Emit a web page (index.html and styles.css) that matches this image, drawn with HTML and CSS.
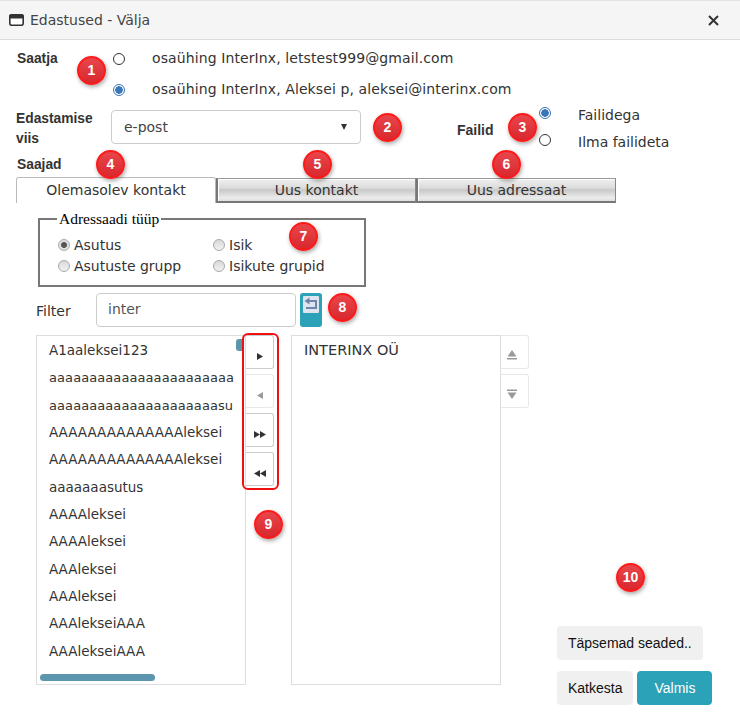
FILE: index.html
```html
<!DOCTYPE html>
<html lang="et">
<head>
<meta charset="utf-8">
<title>Edastused - Välja</title>
<link rel="stylesheet" href="styles.css">
</head>
<body>
<div class="dialog">
  <header class="titlebar">
    <svg class="win-icon" width="15" height="12" viewBox="0 0 15 12"><rect x="0.8" y="0.8" width="13.4" height="10.4" rx="2" fill="#fff" stroke="#333" stroke-width="1.6"/><rect x="0.8" y="0.8" width="13.4" height="3.2" rx="1.2" fill="#333" stroke="#333" stroke-width="1.2"/></svg>
    <span class="title">Edastused - Välja</span>
    <svg class="close" width="11" height="11" viewBox="0 0 11 11"><path d="M1 1L10 10M10 1L1 10" stroke="#333" stroke-width="2"/></svg>
  </header>

  <section class="sender">
    <div class="label sender-label">Saatja</div>
    <div class="sender-options">
      <div class="sender-row"><span class="radio"></span><span class="txt">osaühing InterInx, letstest999@gmail.com</span></div>
      <div class="sender-row"><span class="radio checked"></span><span class="txt">osaühing InterInx, Aleksei p, aleksei@interinx.com</span></div>
    </div>
  </section>

  <section class="delivery">
    <div class="label delivery-label">Edastamise viis</div>
    <div class="select"><span class="txt">e-post</span><span class="caret"></span></div>
    <div class="label files-label">Failid</div>
    <div class="files">
      <div class="file-row"><span class="radio checked"></span><span class="txt">Failidega</span></div>
      <div class="file-row"><span class="radio"></span><span class="txt">Ilma failideta</span></div>
    </div>
  </section>

  <div class="label recipients">Saajad</div>
  <nav class="tabs">
    <div class="tab active">Olemasolev kontakt</div>
    <div class="tab">Uus kontakt</div>
    <div class="tab">Uus adressaat</div>
  </nav>

  <fieldset class="type-box">
    <legend>Adressaadi tüüp</legend>
    <div class="type-grid">
      <div class="type-opt"><span class="gray-radio on"></span>Asutus</div>
      <div class="type-opt"><span class="gray-radio"></span>Isik</div>
      <div class="type-opt"><span class="gray-radio"></span>Asutuste grupp</div>
      <div class="type-opt"><span class="gray-radio"></span>Isikute grupid</div>
    </div>
  </fieldset>

  <div class="filter">
    <span class="filter-label">Filter</span>
    <div class="input">inter</div>
    <div class="reset">
      <svg width="16" height="17" viewBox="0 0 16 17"><rect x="0" y="0" width="16" height="17" rx="1" fill="#dfe5ef"/><path d="M6 5H13V12H3" fill="none" stroke="#6f86ab" stroke-width="2"/><path d="M1.500 5L6.500 1.500V8.500Z" fill="#6f86ab"/></svg>
    </div>
  </div>

  <div class="picker">
    <div class="list left">
      <div class="item">A1aaleksei123</div>
      <div class="item tight">aaaaaaaaaaaaaaaaaaaaaaa</div>
      <div class="item tight">aaaaaaaaaaaaaaaaaaaaasu</div>
      <div class="item">AAAAAAAAAAAAAAleksei</div>
      <div class="item">AAAAAAAAAAAAAAleksei</div>
      <div class="item">aaaaaaasutus</div>
      <div class="item">AAAAleksei</div>
      <div class="item">AAAAleksei</div>
      <div class="item">AAAleksei</div>
      <div class="item">AAAleksei</div>
      <div class="item">AAAlekseiAAA</div>
      <div class="item">AAAlekseiAAA</div>
      <span class="thumb-v"></span>
      <span class="thumb-h"></span>
    </div>
    <div class="moves">
      <div class="btn"><svg width="6" height="7" viewBox="0 0 6 7"><path d="M0 0L6 3.500L0 7Z" fill="#333"/></svg></div>
      <div class="btn off"><svg width="6" height="7" viewBox="0 0 6 7"><path d="M6 0V7L0 3.500Z" fill="#999"/></svg></div>
      <div class="btn"><svg width="12" height="7" viewBox="0 0 12 7"><path d="M0 0L6 3.500L0 7ZM6 0L12 3.500L6 7Z" fill="#333"/></svg></div>
      <div class="btn"><svg width="12" height="7" viewBox="0 0 12 7"><path d="M6 0V7L0 3.500ZM12 0V7L6 3.500Z" fill="#333"/></svg></div>
      <span class="ring"></span>
    </div>
    <div class="list right"><div class="item">INTERINX OÜ</div></div>
    <div class="order">
      <div class="btn off"><svg width="10" height="10" viewBox="0 0 10 10"><path d="M5 0L9.500 6.500H.5Z" fill="#999"/><rect y="8" width="10" height="1.500" fill="#999"/></svg></div>
      <div class="btn off"><svg width="10" height="10" viewBox="0 0 10 10"><rect y=".5" width="10" height="1.500" fill="#999"/><path d="M.5 3.500H9.500L5 10Z" fill="#999"/></svg></div>
    </div>
    <div class="actions">
      <div class="act grey">Täpsemad seaded..</div>
      <div class="act-row">
        <div class="act grey">Katkesta</div>
        <div class="act teal">Valmis</div>
      </div>
    </div>
  </div>

  <span class="badge b1">1</span>
  <span class="badge b2">2</span>
  <span class="badge b3">3</span>
  <span class="badge b4">4</span>
  <span class="badge b5">5</span>
  <span class="badge b6">6</span>
  <span class="badge b7">7</span>
  <span class="badge b8">8</span>
  <span class="badge b9">9</span>
  <span class="badge b10">10</span>
</div>
</body>
</html>
```

FILE: styles.css
```css
* { box-sizing: border-box; }
html, body { margin: 0; padding: 0; background: #fff; }
body { width: 740px; height: 714px; overflow: hidden; font-family: "DejaVu Sans", sans-serif; font-size: 14px; color: #333; }
.dialog { position: relative; width: 740px; height: 714px; border-top: 1px solid #e2e2e2; }

.titlebar { height: 39px; background: #f5f5f5; border-bottom: 1px solid #dcdcdc; display: flex; align-items: center; padding: 0 21px 0 9px; color: #444; font-size: 14px; }
.win-icon { margin-right: 6px; }
.title { flex: 1; }

.label { font-family: "Liberation Sans", sans-serif; font-weight: 700; font-size: 13.800px; color: #333; }

.sender { display: flex; padding: 3px 0 0 17px; height: 70px; }
.sender-label { width: 96px; padding-top: 8px; line-height: 16px; }
.sender-options { display: flex; flex-direction: column; }
.sender-row { display: flex; align-items: center; height: 31px; }
.sender-row .radio { margin: 0 27px 0 0; }
.sender-row .txt { letter-spacing: .1px; padding-bottom: 2px; }

.radio { display: inline-block; width: 12px; height: 12px; border: 1px solid #333; border-radius: 50%; background: #fff; flex: none; }
.radio.checked { border-color: #3a76b8; background: radial-gradient(circle, #3a76b8 0 3.500px, #fff 4px); }

.delivery { display: flex; padding-left: 16px; height: 47px; }
.delivery-label { width: 95px; line-height: 20px; margin-top: -1px; height: 40px; }
.select { width: 250px; height: 34px; border: 1px solid #ccc; border-radius: 4px; display: flex; align-items: center; justify-content: space-between; padding: 0 13px 0 12px; color: #444; }
.caret { width: 0; height: 0; border-left: 3.500px solid transparent; border-right: 3.500px solid transparent; border-top: 6px solid #333; }
.files-label { margin-left: 96px; margin-top: 12px; width: 82px; font-size: 14px; }
.files { width: 150px; margin-top: -9px; }
.file-row { display: flex; height: 27px; align-items: center; }
.file-row .radio { margin-right: 27px; margin-top: -4px; }

.recipients { padding-left: 17px; line-height: 16px; height: 14px; margin-bottom: 6px; }
.tabs { display: flex; padding-left: 16px; height: 26px; align-items: flex-end; }
.tab { width: 200px; height: 25px; text-align: center; line-height: 23px; color: #333; border: 1px solid #8a8a8a; border-width: 1px 1px 2px 2px; border-color: #999 #888 #777 #777; box-shadow: inset 1px 1px #fff; background: linear-gradient(#f0f0f0, #dcdcdc 40%, #c8c8c8 50%, #ebebeb 85%, #e0e0e0); }
.tab.active { height: 26px; background: #fff; border: 1px solid #bbb; border-bottom: none; border-radius: 3px 3px 0 0; box-shadow: none; line-height: 25px; }

.type-box { width: 328px; height: 76px; margin: 8px 0 0 38px; padding: 0 16px; border: 2px solid #777; }
.type-box legend { font-family: "Liberation Serif", serif; font-size: 15.500px; color: #000; padding: 0 2px; margin-left: 1px; line-height: 15px; }
.type-grid { display: grid; grid-template-columns: 155px 1fr; grid-auto-rows: 21px; margin-top: 8px; margin-left: 2px; }
.type-opt { display: flex; align-items: center; gap: 4px; color: #333; }
.gray-radio { width: 12px; height: 12px; border-radius: 50%; border: 1px solid #aaa; background: linear-gradient(#d8d8d8, #f2f2f2); flex: none; }
.gray-radio.on { background: radial-gradient(circle, #555 0 2.500px, #e2e2e2 3.500px); }

.filter { display: flex; height: 34px; margin: 6px 0 0 36px; align-items: center; }
.filter-label { width: 60px; padding-top: 2px; color: #333; }
.input { width: 200px; height: 34px; border: 1px solid #ccc; border-radius: 4px; padding: 0 11px; line-height: 31px; color: #555; }
.reset { width: 22px; height: 34px; margin-left: 4px; background: #2ca2b8; border-radius: 3px; display: flex; justify-content: center; padding-top: 3px; }
.reset svg { display: block; }

.picker { display: flex; align-items: flex-start; margin: 8px 0 0 36px; position: relative; }
.list { width: 210px; height: 350px; border: 1px solid #ddd; position: relative; overflow: hidden; padding-top: 1px; flex: none; }
.item { height: 27.350px; line-height: 27px; padding-left: 12px; white-space: nowrap; overflow: hidden; width: 198px; color: #333; font-size: 13.500px; }
.item.tight { font-size: 13px; letter-spacing: .08px; }
.right { margin-left: 17px; }
.right .item { font-size: 14.500px; }
.thumb-v { position: absolute; right: 1px; top: 3px; width: 8px; height: 12px; background: #5b96ae; border-radius: 3px 0 0 3px; }
.thumb-h { position: absolute; left: 3px; bottom: 3px; width: 115px; height: 7px; background: #5b96ae; border-radius: 4px; }

.moves { position: relative; display: flex; flex-direction: column; gap: 5px; flex: none; width: 28px; }
.btn { width: 28px; height: 34px; border: 1px solid #ccc; border-left: none; border-radius: 0 3px 3px 0; display: flex; align-items: center; justify-content: center; background: #fff; padding-top: 8px; }
.btn.off { border-color: #e8e8e8; }
.ring { position: absolute; left: -4px; top: -2px; width: 37px; height: 157px; border: 2px solid #f01010; border-radius: 6px; }

.order { display: flex; flex-direction: column; gap: 5px; width: 28px; flex: none; }
.order .btn { padding: 6px 5px 0 0; }

.actions { position: absolute; left: 521px; top: 291px; display: flex; flex-direction: column; align-items: flex-start; gap: 11px; font-family: "Liberation Sans", sans-serif; font-size: 14px; }
.act-row { display: flex; gap: 4px; }
.act { height: 34px; line-height: 34px; border-radius: 4px; text-align: center; color: #111; }
.grey { background: #f0f0f0; padding: 0 11px; }
.teal { background: #2ca2b8; color: #fff; width: 75px; }

.badge { position: absolute; width: 29px; height: 29px; border-radius: 50%; background: linear-gradient(#e8464b, #d8282e); border: 2px solid #ff1a1a; color: #fff; font-family: "Liberation Sans", sans-serif; font-size: 14px; font-weight: 700; text-align: center; line-height: 25px; box-shadow: 1px 2px 4px rgba(0,0,0,.35); }
.b1 { left: 77px; top: 55px; }
.b2 { left: 373px; top: 112px; }
.b3 { left: 508px; top: 112px; }
.b4 { left: 96px; top: 149px; }
.b5 { left: 303px; top: 149px; }
.b6 { left: 492px; top: 149px; }
.b7 { left: 289px; top: 221px; }
.b8 { left: 328px; top: 292px; }
.b9 { left: 254px; top: 509px; }
.b10 { left: 616px; top: 562px; }
```
